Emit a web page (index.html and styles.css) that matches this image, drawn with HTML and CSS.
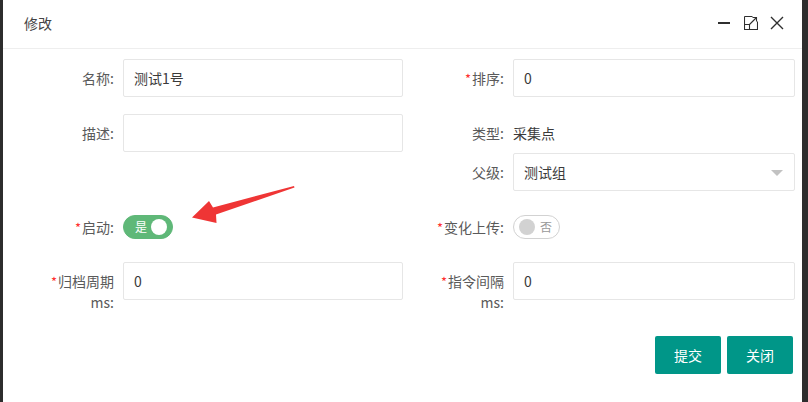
FILE: index.html
```html
<!DOCTYPE html>
<html lang="zh-CN">
<head>
<meta charset="utf-8">
<title>修改</title>
<link rel="stylesheet" href="styles.css">
</head>
<body>
<div class="dialog">
  <div class="dlg-head">
    <span class="dlg-title">修改</span>
    <div class="dlg-tools">
      <svg class="ico" viewBox="0 0 14 14" width="14" height="14"><line x1="0" y1="7" x2="12" y2="7" stroke="#2f2f2f" stroke-width="2"/></svg>
      <svg class="ico" viewBox="0 0 14 14" width="14" height="14" fill="none" stroke="#2f2f2f" stroke-width="1.1"><path d="M0.5 0.5H8.5M0.5 0.5V13.5H13.5V5.5M0.5 8.5H5.5V13.5M5.5 8.5L12.5 1.5M8.5 1.5H12.5V5.5"/></svg>
      <svg class="ico" viewBox="0 0 14 14" width="14" height="14" stroke="#2f2f2f" stroke-width="1.4"><path d="M1 1L13 13M13 1L1 13"/></svg>
    </div>
  </div>
  <form class="form">
    <div class="row r1">
      <label class="lbl">名称:</label>
      <div class="input">测试1号</div>
      <label class="lbl"><span class="req">*</span>排序:</label>
      <div class="input">0</div>
    </div>
    <div class="row r2">
      <label class="lbl">描述:</label>
      <div class="input"></div>
      <label class="lbl">类型:</label>
      <div class="text">采集点</div>
    </div>
    <div class="row r3">
      <div></div>
      <div></div>
      <label class="lbl">父级:</label>
      <div class="input select"><span>测试组</span><i class="edge"></i></div>
    </div>
    <div class="row r4">
      <label class="lbl"><span class="req">*</span>启动:</label>
      <div class="sw-cell"><div class="switch on"><em>是</em><i class="knob"></i></div></div>
      <label class="lbl"><span class="req">*</span>变化上传:</label>
      <div class="sw-cell"><div class="switch off"><i class="knob"></i><em>否</em></div></div>
    </div>
    <div class="row r5">
      <label class="lbl"><span class="req">*</span>归档周期ms:</label>
      <div class="input">0</div>
      <label class="lbl"><span class="req">*</span>指令间隔ms:</label>
      <div class="input">0</div>
    </div>
    <div class="btns">
      <button type="button" class="btn">提交</button>
      <button type="button" class="btn">关闭</button>
    </div>
  </form>
</div>
<svg class="annot" width="808" height="402" viewBox="0 0 808 402">
  <polygon points="192,217.5 209,201 213,207.5 294,186 294.5,187.5 216,214.5 216.5,223" fill="#ef3535"/>
</svg>
</body>
</html>
```
FILE: styles.css
```css
html, body {
  margin: 0;
  padding: 0;
}
body {
  width: 808px;
  height: 402px;
  background: #2d2d2d;
  position: relative;
  overflow: hidden;
  font-family: "Noto Sans CJK SC", "Noto Sans", sans-serif;
  font-size: 14px;
  color: #333;
}
.dialog {
  margin-left: 3px;
  width: 799px;
  height: 402px;
  background: #fff;
}
.dlg-head {
  height: 49px;
  border-bottom: 1px solid #eeeeee;
  display: flex;
  align-items: center;
  justify-content: space-between;
  padding: 0 18px 2px 21px;
  box-sizing: border-box;
}
.dlg-title {
  font-size: 14px;
  color: #444;
}
.dlg-tools {
  display: flex;
  align-items: center;
  gap: 12px;
}
.ico {
  display: block;
}
.form {
  margin: 0;
  padding: 10px 0 0 10px;
}
.row {
  display: grid;
  grid-template-columns: 110px 280px 110px 282px;
  align-items: start;
}
.r1 { margin-bottom: 16px; }
.r2 { margin-bottom: 1px; }
.r3 { margin-bottom: 17px; }
.r4 { margin-bottom: 15px; }
.lbl {
  box-sizing: border-box;
  padding: 9px 9px 9px 25px;
  line-height: 20px;
  text-align: right;
  color: #5a5a5a;
  font-size: 14px;
}
.req {
  color: #ff3030;
  font-size: 13px;
  margin-right: 1px;
}
.input {
  box-sizing: border-box;
  height: 38px;
  border: 1px solid #e6e6e6;
  border-radius: 2px;
  padding: 0 10px;
  line-height: 36px;
  color: #3a3a3a;
  background: #fff;
}
.text {
  line-height: 38px;
  color: #3a3a3a;
}
.select {
  display: flex;
  align-items: center;
  justify-content: space-between;
  padding-right: 11px;
}
.edge {
  width: 0;
  height: 0;
  border-left: 6px solid transparent;
  border-right: 6px solid transparent;
  border-top: 6px solid #c2c2c2;
  margin-top: 1px;
}
.sw-cell {
  padding-top: 7px;
}
.switch {
  box-sizing: border-box;
  height: 24px;
  border-radius: 20px;
  display: flex;
  align-items: center;
}
.switch em {
  font-style: normal;
  font-size: 12px;
  line-height: 22px;
}
.knob {
  display: block;
  width: 16px;
  height: 16px;
  border-radius: 50%;
}
.switch.on {
  width: 50px;
  background: #5fb878;
  border: 1px solid #5fb878;
  padding: 0 5px 0 11px;
  justify-content: space-between;
  color: #fff;
}
.switch.on .knob {
  background: #fff;
}
.switch.off {
  width: 47px;
  background: #fff;
  border: 1px solid #d2d2d2;
  padding: 0 0 0 5px;
  gap: 5px;
  color: #999;
}
.switch.off .knob {
  background: #d2d2d2;
}
.btns {
  display: flex;
  justify-content: flex-end;
  gap: 6px;
  margin-top: 15px;
  padding-right: 9px;
}
.btn {
  height: 38px;
  padding: 0 19px;
  border: none;
  border-radius: 2px;
  background: #009688;
  color: #fff;
  font-family: "Noto Sans CJK SC", "Noto Sans", sans-serif;
  font-size: 14px;
  line-height: 38px;
}
.annot {
  position: absolute;
  left: 0;
  top: 0;
  pointer-events: none;
}
```
